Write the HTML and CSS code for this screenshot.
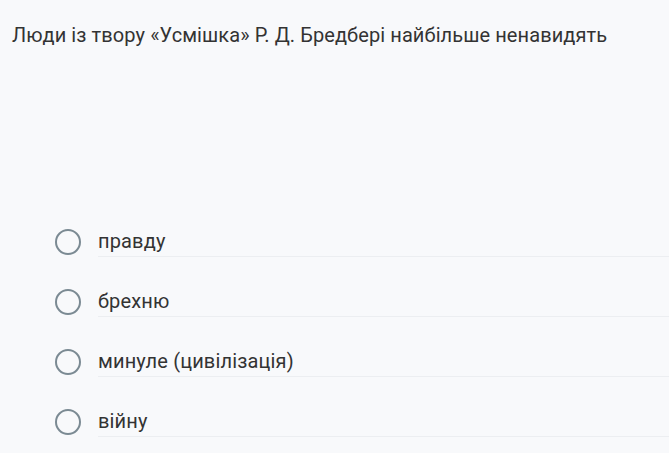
FILE: index.html
```html
<!DOCTYPE html>
<html lang="uk">
<head>
<meta charset="utf-8">
<link rel="stylesheet" href="styles.css">
</head>
<body>
<div class="page">
  <h1 class="question">Люди із твору «Усмішка» Р. Д. Бредбері найбільше ненавидять</h1>
  <div class="options">
    <label class="option"><span class="radio"></span><span class="text">правду</span></label>
    <label class="option"><span class="radio"></span><span class="text">брехню</span></label>
    <label class="option"><span class="radio"></span><span class="text">минуле (цивілізація)</span></label>
    <label class="option"><span class="radio"></span><span class="text">війну</span></label>
  </div>
</div>
</body>
</html>
```

FILE: styles.css
```css
html, body {
  margin: 0;
  padding: 0;
  background: #f8f9fb;
}
.page {
  font-family: Roboto, "Noto Sans", sans-serif;
  color: #333;
}
.question {
  margin: 0;
  padding: 23px 0 0 12px;
  font-size: 20px;
  font-weight: 400;
  line-height: 24px;
  letter-spacing: 0.09px;
}
.options {
  margin-top: 179px;
  display: flex;
  flex-direction: column;
  gap: 29px;
}
.option {
  display: flex;
  align-items: center;
  gap: 17px;
  padding-left: 55px;
}
.radio {
  flex: none;
  width: 22px;
  height: 22px;
  border: 2px solid #7b8a93;
  border-radius: 50%;
}
.text {
  flex: 1;
  height: 30px;
  line-height: 30px;
  font-size: 20px;
  letter-spacing: 0.15px;
  color: #333;
  border-bottom: 1px solid #eceef1;
}
```
